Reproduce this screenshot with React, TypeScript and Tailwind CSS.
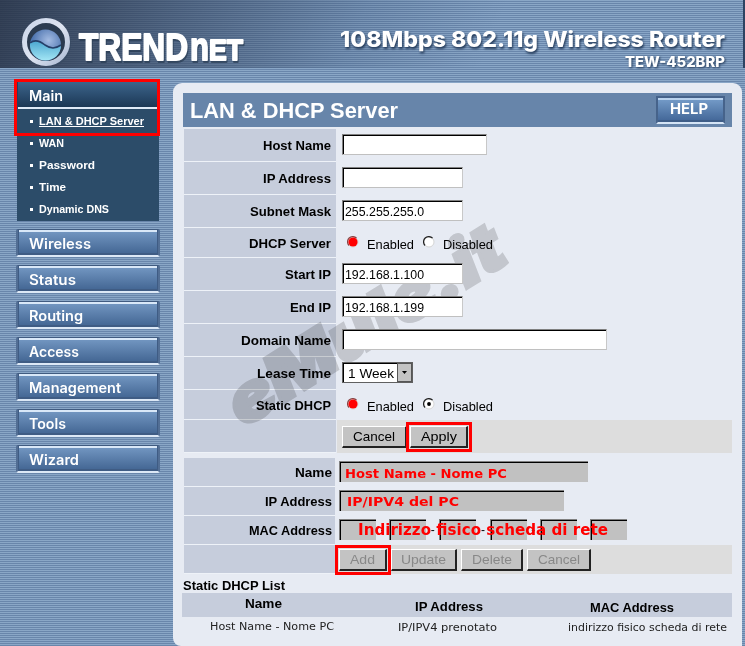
import React from "react";
import { clsx } from "clsx";

const SUBMENU = ["LAN & DHCP Server", "WAN", "Password", "Time", "Dynamic DNS"];
const SUBMENU_WIDTHS = [105, 25, 56, 27, 70];

const MENU = [
  { label: "Wireless", width: 62 },
  { label: "Status", width: 47 },
  { label: "Routing", width: 54 },
  { label: "Access", width: 50 },
  { label: "Management", width: 92 },
  { label: "Tools", width: 37 },
  { label: "Wizard", width: 50 },
];

interface FitProps {
  children: string;
  width: number;
  size: number;
  className?: string;
  weight?: number;
  family?: string;
  underline?: boolean;
}

// One line of lettering, condensed or expanded to a fixed width
function Fit({ children, width, size, className, weight = 400, family = "Liberation Sans", underline }: FitProps) {
  return (
    <svg
      width={width}
      height={size + 4}
      className={clsx("block shrink-0 overflow-visible", className)}
      fill="currentColor"
    >
      <text
        x="0"
        y={size}
        fontSize={size}
        fontWeight={weight}
        fontFamily={`"${family}", sans-serif`}
        textLength={width}
        lengthAdjust="spacingAndGlyphs"
      >
        {children}
      </text>
      {underline && <rect x="0" y={size + 1} width={width} height="1" />}
    </svg>
  );
}

function Logo() {
  return (
    <svg width="226" height="52" viewBox="0 0 226 52" className="block overflow-visible">
      <defs>
        <linearGradient id="ring" x1="0" y1="0" x2="1" y2="1">
          <stop offset="0" stopColor="#c9d4e8" />
          <stop offset="0.5" stopColor="#dfe5f2" />
          <stop offset="1" stopColor="#aab9d3" />
        </linearGradient>
        <radialGradient id="globe" cx="0.6" cy="0.35" r="0.6">
          <stop offset="0" stopColor="#a3bbe2" />
          <stop offset="1" stopColor="#416aa8" />
        </radialGradient>
        <linearGradient id="sea" x1="0" y1="0" x2="0" y2="1">
          <stop offset="0" stopColor="#4aa6d0" />
          <stop offset="1" stopColor="#a4e6f5" />
        </linearGradient>
      </defs>
      <circle cx="26" cy="26" r="23" fill="#33475f" opacity="0.5" />
      <circle cx="24" cy="24" r="21.500" fill="#2b3b50" stroke="url(#ring)" strokeWidth="5" />
      <circle cx="23.500" cy="27" r="15.500" fill="url(#globe)" />
      <path d="M8 25c5-4 10-2 15 2 6 4 10 4 16 0 0 9-7 15.500-15.500 15.500S7 35 8 25z" fill="url(#sea)" />
      <path d="M8 25c5-4 10-2 15 2 6 4 10 4 16 0" fill="none" stroke="#253f68" strokeWidth="1.6" />
      <g fontFamily='"Liberation Sans", sans-serif' fontWeight="700" strokeLinejoin="round">
        <g fill="#26394f" stroke="#26394f" strokeWidth="1.8" opacity="0.65">
          <text x="58" y="43.500" fontSize="37" textLength="109" lengthAdjust="spacingAndGlyphs">TREND</text>
          <text x="169" y="43.500" fontSize="39" textLength="19" lengthAdjust="spacingAndGlyphs">n</text>
          <text x="188" y="43.500" fontSize="29" textLength="34" lengthAdjust="spacingAndGlyphs">ET</text>
        </g>
        <g fill="#fff" stroke="#fff" strokeWidth="1.8">
          <text x="57" y="41.500" fontSize="37" textLength="109" lengthAdjust="spacingAndGlyphs">TREND</text>
          <text x="168" y="41.500" fontSize="39" textLength="19" lengthAdjust="spacingAndGlyphs">n</text>
          <text x="187" y="41.500" fontSize="29" textLength="34" lengthAdjust="spacingAndGlyphs">ET</text>
        </g>
      </g>
    </svg>
  );
}

function Header() {
  return (
    <header className="flex h-[68px] items-start justify-between border-r-2 border-[#2d4464] bg-[linear-gradient(112deg,rgba(35,45,64,0.85)_0%,rgba(48,64,90,0.6)_24%,rgba(60,85,120,0.25)_48%,transparent_66%)] pl-[22px]">
      <div className="pt-[18px]">
        <Logo />
      </div>
      <div className="flex flex-col items-end pt-[25px] pr-[18px] text-white">
        <Fit width={385} size={22} weight={800} family="Inter" className="drop-shadow-[1px_2px_1px_#243b5a]">
          108Mbps 802.11g Wireless Router
        </Fit>
        <Fit width={100} size={14} weight={800} family="Inter" className="mt-[2px] drop-shadow-[1px_1px_1px_#243b5a]">
          TEW-452BRP
        </Fit>
      </div>
    </header>
  );
}

function Sidebar() {
  return (
    <nav className="relative w-[173px] shrink-0 pt-[14px] pl-4 text-white">
      <div className="ml-px w-[142px] bg-[#2c4c69]">
        <div className="h-[25px] border-x border-[#243f5e] bg-linear-to-b from-[#3d658c] to-[#1c3855] pt-[5px] pl-[11px]">
          <Fit width={34} size={14} weight={600} family="Inter">Main</Fit>
        </div>
        <div className="mx-px h-[2px] bg-[#dfeaf7]" />
        <ul className="pt-px pl-[13px]">
          {SUBMENU.map((item, i) => (
            <li key={item} className="flex h-[22px] items-center">
              <span className="mr-[6px] size-[3px] bg-white" />
              <Fit width={SUBMENU_WIDTHS[i]} size={11} weight={700} underline={i === 0}>
                {item}
              </Fit>
            </li>
          ))}
        </ul>
        <div className="h-px" />
      </div>

      <div className="mt-[8px] flex flex-col gap-2">
        {MENU.map((item) => (
          <div key={item.label} className="h-[28px] w-[144px] rounded-[2px] border-x-2 border-t border-b-2 border-x-[#526e94] border-t-[#405b80] border-b-[#dce8f6] bg-[#3f5c84] px-px pb-[2px]">
            <div className="h-full border-t-2 border-[#d9e8f8] bg-linear-to-b from-[#7195c0] to-[#456895] pt-[3px] pl-[10px]">
              <Fit width={item.width} size={14} weight={600} family="Inter">{item.label}</Fit>
            </div>
          </div>
        ))}
      </div>

      {/* Highlight */}
      <div className="absolute top-[11px] left-[14px] h-[57px] w-[146px] border-[3px] border-[#ff0000]" />
    </nav>
  );
}

interface RowProps {
  label?: string;
  labelWidth?: number;
  height: string;
  second?: boolean;
  gray?: boolean;
  children: React.ReactNode;
}

function Row({ label, labelWidth = 0, height, second, gray, children }: RowProps) {
  return (
    <div className={clsx("flex", height)}>
      <div
        className={clsx(
          "flex h-full shrink-0 items-center justify-end border-b border-[#eef2f8] bg-[#c6cddc]",
          second ? "w-[151px] pr-[3px]" : "w-[152px] pr-[5px]"
        )}
      >
        {label && <Fit width={labelWidth} size={13} weight={700} className="mt-px">{label}</Fit>}
      </div>
      <div
        className={clsx(
          "flex flex-1 items-center",
          second ? "ml-px pl-[3px]" : "ml-px pl-[5px]",
          gray ? "bg-[#dddddd]" : "pb-[2px]"
        )}
      >
        {children}
      </div>
    </div>
  );
}

function TextBox({ width, value, valueWidth = 0 }: { width: string; value?: string; valueWidth?: number }) {
  return (
    <div className={clsx("relative z-20 h-[21px] border border-t-[#808080] border-r-[#c8c8c8] border-b-[#c0c0c0] border-l-[#808080] bg-white", width)}>
      <div className="h-full border-t border-l border-black pt-px pl-px">
        {value && <Fit width={valueWidth} size={13}>{value}</Fit>}
      </div>
    </div>
  );
}

function Radio({ red, checked }: { red?: boolean; checked?: boolean }) {
  return (
    <svg width="12" height="12" viewBox="0 0 12 12" className="mb-[2px] block shrink-0">
      <circle cx="6" cy="6" r="5" fill="#fff" stroke="#d5d5d5" strokeWidth="1" />
      <path d="M2 9.500A5 5 0 0 1 9.600 2.200" fill="none" stroke={red ? "#8a4545" : "#222"} strokeWidth="1.2" />
      {red && <circle cx="6" cy="6" r="4.600" fill="#ff0000" />}
      {checked && <circle cx="6" cy="6" r="1.900" fill="#000" />}
    </svg>
  );
}

function RadioPair({ checked }: { checked?: boolean }) {
  return (
    <div className="relative top-px z-20 flex items-center pl-[5px]">
      <Radio red />
      <Fit width={47} size={13} className="mt-[2px] ml-[8px]">Enabled</Fit>
      <div className="w-[9px]" />
      <Radio checked={checked} />
      <Fit width={50} size={13} className="mt-[2px] ml-[8px]">Disabled</Fit>
    </div>
  );
}

function Button({ label, box, width, disabled }: { label: string; box: string; width: number; disabled?: boolean }) {
  return (
    <div
      className={clsx(
        "flex h-[22px] shrink-0 items-center justify-center border-t border-r-2 border-b-2 border-l border-t-white border-r-[#222] border-b-[#222] border-l-white bg-[#c3c3c3]",
        box,
        disabled ? "text-[#888888]" : "text-black"
      )}
    >
      <Fit width={width} size={13}>{label}</Fit>
    </div>
  );
}

function GrayBox({ width }: { width: string }) {
  return (
    <div className={clsx("h-[21px] shrink-0 border-t border-l border-[#808080] bg-[#c1c1c1]", width)}>
      <div className="h-full border-t border-l border-black" />
    </div>
  );
}

// Red lettering written over the form fields
function Note({ children, width, className, size = 13 }: { children: string; width: number; className: string; size?: number }) {
  return (
    <div className={clsx("absolute z-20 text-[#ff0000]", className)}>
      <Fit width={width} size={size} weight={700} family="DejaVu Sans">{children}</Fit>
    </div>
  );
}

function Panel() {
  return (
    <main className="mt-[15px] h-[563px] w-[569px] rounded-t-[9px] rounded-bl-[8px] bg-[#e7ebf3] pt-[10px] pr-[10px] pl-[9px]">
      {/* Title */}
      <div className="ml-px flex h-[34px] items-center justify-between bg-[#6785aa] pr-[7px] pl-[7px] text-white">
        <Fit width={208} size={22} weight={700} className="mb-[3px]">LAN &amp; DHCP Server</Fit>
        <div className="h-[28px] w-[69px] border-2 border-b-[2px] border-[#46638b] border-b-[#d5e4f5] bg-[#3f5d87] pb-[2px]">
          <div className="flex h-full justify-center border-t-2 border-[#b9d2ed] bg-linear-to-b from-[#7299c6] to-[#45699a] pr-1">
            <Fit width={38} size={14} weight={700} family="Inter">HELP</Fit>
          </div>
        </div>
      </div>

      {/* LAN settings */}
      <div className="mt-[2px] ml-[2px]">
        <Row label="Host Name" labelWidth={68} height="h-[33px]"><TextBox width="w-[145px]" /></Row>
        <Row label="IP Address" labelWidth={68} height="h-[33px]"><TextBox width="w-[121px]" /></Row>
        <Row label="Subnet Mask" labelWidth={81} height="h-[33px]">
          <TextBox width="w-[121px]" value="255.255.255.0" valueWidth={79} />
        </Row>
        <Row label="DHCP Server" labelWidth={82} height="h-[30px]"><RadioPair /></Row>
        <Row label="Start IP" labelWidth={46} height="h-[33px]">
          <TextBox width="w-[121px]" value="192.168.1.100" valueWidth={79} />
        </Row>
        <Row label="End IP" labelWidth={41} height="h-[33px]">
          <TextBox width="w-[121px]" value="192.168.1.199" valueWidth={79} />
        </Row>
        <Row label="Domain Name" labelWidth={90} height="h-[33px]"><TextBox width="w-[265px]" /></Row>
        <Row label="Lease Time" labelWidth={74} height="h-[33px]">
          <div className="relative z-20 flex h-[21px] w-[71px] border border-[#606060] bg-white">
            <div className="flex-1 border-t border-l border-black pt-px pl-1">
              <Fit width={46} size={13}>1 Week</Fit>
            </div>
            <div className="flex w-[15px] items-center justify-center border border-[#555555] bg-[#c3c3c3]">
              <svg width="5" height="3" viewBox="0 0 5 3"><path d="M0 0h5L2.500 3z" /></svg>
            </div>
          </div>
        </Row>
        <Row label="Static DHCP" labelWidth={75} height="h-[30px]"><RadioPair checked /></Row>
        <Row height="h-[33px]" gray>
          <Button label="Cancel" box="w-[65px]" width={42} />
          <div className="ml-[-1px] border-[3px] border-[#ff0000] p-px">
            <Button label="Apply" box="w-[58px]" width={36} />
          </div>
        </Row>
      </div>

      {/* Static DHCP entry */}
      <div className="mt-[5px] ml-[2px]">
        <Row label="Name" labelWidth={37} height="h-[29px]" second><GrayBox width="w-[249px]" /></Row>
        <Row label="IP Address" labelWidth={67} height="h-[29px]" second><GrayBox width="w-[225px]" /></Row>
        <Row label="MAC Address" labelWidth={83} height="h-[29px]" second>
          {[0, 1, 2, 3, 4, 5].map((n) => (
            <div key={n} className="flex items-center">
              <GrayBox width="w-[37px]" />
              {n < 5 && <span className="w-[13.200px] text-center font-['Liberation_Sans'] text-[12px] leading-none">-</span>}
            </div>
          ))}
        </Row>
        <Row height="h-[29px]" second gray>
          <div className="ml-[-4px] border-[3px] border-[#ff0000] p-px">
            <Button label="Add" box="w-[48px]" width={25} disabled />
          </div>
          <Button label="Update" box="w-[66px]" width={45} disabled />
          <Button label="Delete" box="ml-1 w-[62px]" width={40} disabled />
          <Button label="Cancel" box="ml-1 w-[64px]" width={42} disabled />
        </Row>
      </div>

      {/* Static DHCP list */}
      <Fit width={102} size={13} weight={700} className="mt-[3px] ml-px">Static DHCP List</Fit>
      <div className="mt-[-1px] flex h-[24px] bg-[#c6cddc]">
        <Fit width={37} size={13} weight={700} className="mt-[2px] ml-[63px]">Name</Fit>
        <Fit width={68} size={13} weight={700} className="mt-[5px] ml-[133px]">IP Address</Fit>
        <Fit width={84} size={13} weight={700} className="mt-[6px] ml-[107px]">MAC Address</Fit>
      </div>
      <div className="flex text-[#222222]">
        <Fit width={124} size={11} family="DejaVu Sans" className="mt-[2px] ml-[28px]">Host Name - Nome PC</Fit>
        <Fit width={99} size={11} family="DejaVu Sans" className="mt-[3px] ml-[64px]">IP/IPV4 prenotato</Fit>
        <Fit width={159} size={11} family="DejaVu Sans" className="mt-[3px] ml-[71px]">indirizzo fisico scheda di rete</Fit>
      </div>
    </main>
  );
}

export default function App() {
  return (
    <div className="relative h-[646px] w-[745px] overflow-hidden bg-[repeating-linear-gradient(180deg,#8aa7c7_0px,#8aa7c7_1px,#6986ab_1px,#6986ab_2px)]">
      <Header />
      <div className="flex">
        <Sidebar />
        <Panel />
      </div>

      <Note className="top-[465px] left-[345px]" width={162}>Host Name - Nome PC</Note>
      <Note className="top-[493px] left-[347px]" width={112}>IP/IPV4 del PC</Note>
      <Note className="top-[520px] left-[358px]" width={250} size={15}>Indirizzo fisico scheda di rete</Note>

      {/* Watermark */}
      <div className="absolute top-[284px] left-[208px] z-10 -rotate-[32deg] text-[#d7d7d7] mix-blend-multiply">
        <svg width="320" height="76" className="block overflow-visible">
          <text x="-2" y="62" fontSize="66" fontWeight="900" fontStyle="italic" fontFamily="Inter, sans-serif" fill="currentColor" stroke="currentColor" strokeWidth="3" textLength="316" lengthAdjust="spacingAndGlyphs">
            eMule.it
          </text>
        </svg>
      </div>
    </div>
  );
}
